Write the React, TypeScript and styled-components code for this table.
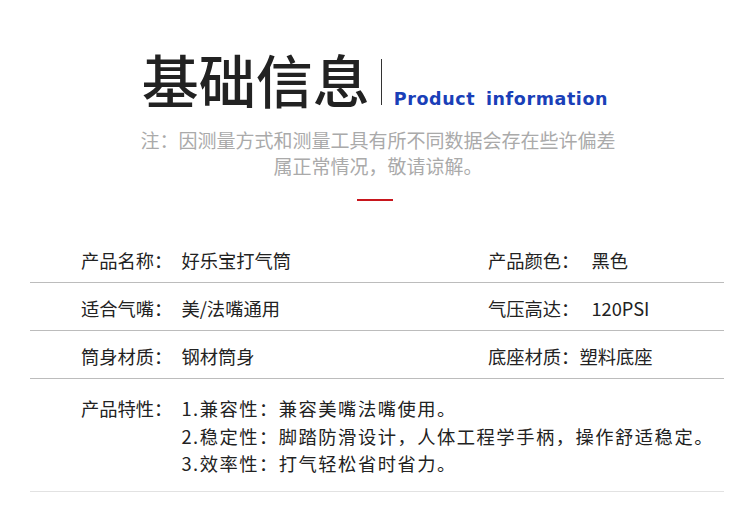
import React from 'react'
import styled, { createGlobalStyle } from 'styled-components'

interface SpecItem {
  label: string
  value: string
  gap: number
}

const GlobalStyle = createGlobalStyle`
  body {
    margin: 0;
    background: #fff;
    font-family: "Noto Sans CJK SC", "Noto Sans", sans-serif;
  }
`

const specRows: SpecItem[][] = [
  [
    { label: '产品名称：', value: '好乐宝打气筒', gap: 9 },
    { label: '产品颜色：', value: '黑色', gap: 12 }
  ],
  [
    { label: '适合气嘴：', value: '美/法嘴通用', gap: 9 },
    { label: '气压高达：', value: '120PSI', gap: 12 }
  ],
  [
    { label: '筒身材质：', value: '钢材筒身', gap: 9 },
    { label: '底座材质：', value: '塑料底座', gap: 0 }
  ]
]

const features = [
  '1.兼容性：兼容美嘴法嘴使用。',
  '2.稳定性：脚踏防滑设计，人体工程学手柄，操作舒适稳定。',
  '3.效率性：打气轻松省时省力。'
]

const App = () => {
  return (
    <Page>
      <GlobalStyle />
      <Header>
        <Title>基础信息</Title>
        <Divider />
        <Subtitle>Product information</Subtitle>
      </Header>
      <Note>
        注：因测量方式和测量工具有所不同数据会存在些许偏差
        <br />
        属正常情况，敬请谅解。
      </Note>
      <Accent />
      <SpecTable>
        {specRows.map((row, index) => (
          <SpecRow key={index}>
            {row.map((item) => (
              <SpecCell key={item.label}>
                <Label>{item.label}</Label>
                <Value $gap={item.gap}>{item.value}</Value>
              </SpecCell>
            ))}
          </SpecRow>
        ))}
        <FeatureRow>
          <Label>产品特性：</Label>
          <FeatureList>
            {features.map((f) => (
              <li key={f}>{f}</li>
            ))}
          </FeatureList>
        </FeatureRow>
      </SpecTable>
    </Page>
  )
}

const Page = styled.div`
  width: 750px;
  height: 518px;
  overflow: hidden;
  background: #fff;
`

const Header = styled.div`
  display: flex;
  justify-content: center;
  align-items: flex-end;
  padding-top: 47px;
`

const Title = styled.h1`
  margin: 0;
  font-size: 57px;
  line-height: 62px;
  font-weight: 500;
  color: #222;
`

const Divider = styled.span`
  width: 1px;
  height: 46px;
  background: #333;
  margin: 0 12px 4px 11px;
`

const Subtitle = styled.span`
  font-family: "DejaVu Sans", "Noto Sans", sans-serif;
  font-weight: bold;
  font-size: 17.5px;
  letter-spacing: 0.6px;
  word-spacing: 4px;
  color: #1a3fb8;
  line-height: 20px;
  margin-bottom: 0;
`

const Note = styled.p`
  margin: 18px 0 0;
  text-align: center;
  font-size: 19px;
  line-height: 26px;
  color: #aaa;
  padding-left: 6px;
`

const Accent = styled.div`
  width: 36px;
  height: 2px;
  background: #c8161d;
  margin: 20px auto 0;
`

const SpecTable = styled.div`
  margin: 34px 26px 0 30px;
`

const SpecRow = styled.div`
  display: grid;
  grid-template-columns: 407px 1fr;
  height: 47px;
  align-items: center;
  border-bottom: 1px solid #bcbcbc;
  padding-left: 51px;
`

const SpecCell = styled.div`
  display: flex;
  padding-top: 2px;
`

const Label = styled.span`
  white-space: pre;
  color: #222;
  font-size: 18.3px;
`

const Value = styled.span<{ $gap: number }>`
  white-space: pre;
  color: #222;
  font-size: 18.3px;
  margin-left: ${(p) => p.$gap}px;
`

const FeatureRow = styled.div`
  display: flex;
  padding: 16px 0 13px 51px;
  border-bottom: 1px solid #e2e2e2;
  line-height: 27.5px;
`

const FeatureList = styled.ul`
  list-style: none;
  margin: 0;
  padding: 0 0 0 9px;
  font-size: 18.3px;
  letter-spacing: 1.5px;
  color: #222;
`

export default App
